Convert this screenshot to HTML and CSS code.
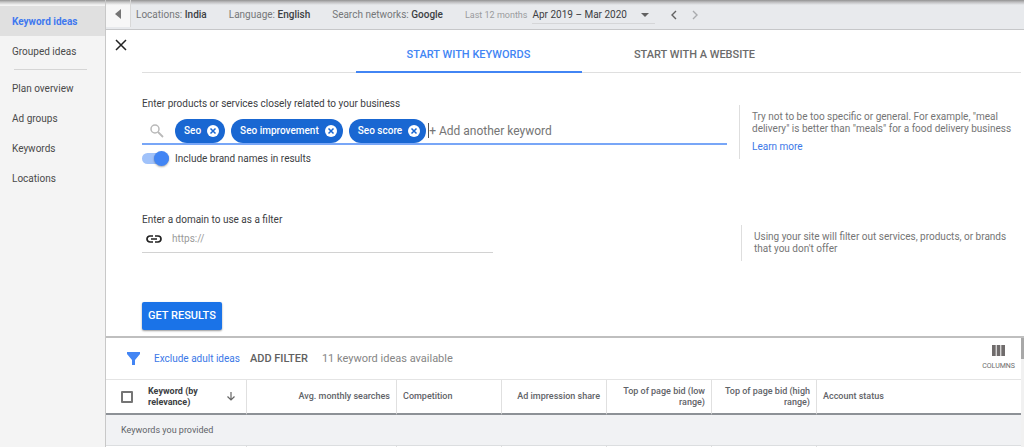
FILE: index.html
```html
<!DOCTYPE html>
<html lang="en">
<head>
<meta charset="utf-8">
<title>Keyword ideas</title>
<link rel="stylesheet" href="styles.css">
</head>
<body>
<div class="app">
  <nav class="sidebar" aria-label="Sections">
    <a class="nav-link active" href="#ideas">Keyword ideas</a>
    <a class="nav-link" href="#grouped">Grouped ideas</a>
    <hr class="nav-rule">
    <a class="nav-link" href="#plan">Plan overview</a>
    <a class="nav-link" href="#adgroups">Ad groups</a>
    <a class="nav-link" href="#keywords">Keywords</a>
    <a class="nav-link" href="#locations">Locations</a>
  </nav>

  <main class="content">
    <header class="topbar">
      <button class="collapse" aria-label="Collapse menu"><svg width="6" height="10" viewBox="0 0 6 10"><path d="M6 0v10L0 5z" fill="#757575"/></svg></button>
      <div class="settings">
        <span class="setting">Locations: <b>India</b></span>
        <span class="setting">Language: <b>English</b></span>
        <span class="setting">Search networks: <b>Google</b></span>
      </div>
      <span class="period">Last 12 months</span>
      <button class="dates">Apr 2019 – Mar 2020 <svg width="8" height="4" viewBox="0 0 8 4"><path d="M0 0h8L4 4z" fill="#616161"/></svg></button>
      <button class="step" aria-label="Previous period"><svg width="6" height="10" viewBox="0 0 6 10"><path d="M5 1L1 5l4 4" fill="none" stroke="#616161" stroke-width="1.4"/></svg></button>
      <button class="step" aria-label="Next period"><svg width="6" height="10" viewBox="0 0 6 10"><path d="M1 1l4 4-4 4" fill="none" stroke="#a9abae" stroke-width="1.4"/></svg></button>
    </header>

    <section class="panel">
      <button class="close" aria-label="Close"><svg width="12" height="12" viewBox="0 0 12 12"><path d="M1 1l10 10M11 1L1 11" stroke="#222" stroke-width="1.5"/></svg></button>
      <div class="panel-body">
        <div class="tabs" role="tablist">
          <button class="tab selected" role="tab" aria-selected="true">START WITH KEYWORDS</button>
          <button class="tab" role="tab" aria-selected="false">START WITH A WEBSITE</button>
        </div>

        <div class="form-row">
          <div class="field">
            <label class="label" for="keyword">Enter products or services closely related to your business</label>
            <div class="keyword-box">
              <svg class="search" width="14" height="14" viewBox="0 0 14 14"><circle cx="5" cy="5" r="4" fill="none" stroke="#b9b9b9" stroke-width="1.5"/><path d="M8 8l5 5" stroke="#b9b9b9" stroke-width="1.8"/></svg>
              <span class="chip">Seo <button class="remove" aria-label="Remove Seo"><svg width="12" height="12" viewBox="0 0 12 12"><circle cx="6" cy="6" r="6" fill="#fff"/><path d="M3.5 3.5l5 5M8.5 3.5l-5 5" stroke="#1967d2" stroke-width="1.5"/></svg></button></span>
              <span class="chip">Seo improvement <button class="remove" aria-label="Remove Seo improvement"><svg width="12" height="12" viewBox="0 0 12 12"><circle cx="6" cy="6" r="6" fill="#fff"/><path d="M3.5 3.5l5 5M8.5 3.5l-5 5" stroke="#1967d2" stroke-width="1.5"/></svg></button></span>
              <span class="chip">Seo score <button class="remove" aria-label="Remove Seo score"><svg width="12" height="12" viewBox="0 0 12 12"><circle cx="6" cy="6" r="6" fill="#fff"/><path d="M3.5 3.5l5 5M8.5 3.5l-5 5" stroke="#1967d2" stroke-width="1.5"/></svg></button></span>
              <input class="keyword-input" id="keyword" type="text" placeholder="+ Add another keyword">
            </div>
            <label class="toggle"><input class="switch" type="checkbox" role="switch" checked>Include brand names in results</label>
          </div>
          <aside class="hint">
            <p class="hint-text">Try not to be too specific or general. For example, "meal delivery" is better than "meals" for a food delivery business</p>
            <a class="more" href="#help">Learn more</a>
          </aside>
        </div>

        <div class="form-row domain-row">
          <div class="field">
            <label class="label" for="domain">Enter a domain to use as a filter</label>
            <div class="domain-box">
              <svg width="16" height="8" viewBox="0 0 16 8"><path d="M7 1H4a3 3 0 0 0 0 6h3M9 1h3a3 3 0 0 1 0 6H9M5 4h6" fill="none" stroke="#222" stroke-width="1.7"/></svg>
              <input class="domain-input" id="domain" type="text" placeholder="https://">
            </div>
          </div>
          <aside class="hint domain-hint">
            <p class="hint-text">Using your site will filter out services, products, or brands that you don't offer</p>
          </aside>
        </div>

        <button class="submit">GET RESULTS</button>
      </div>
    </section>

    <section class="results">
      <div class="results-main">
        <div class="toolbar">
          <svg class="funnel" width="13" height="13" viewBox="0 0 13 13"><path d="M0 0h13v2L8 8v5H5V8L0 2z" fill="#4285f4"/></svg>
          <a class="exclude" href="#exclude">Exclude adult ideas</a>
          <button class="add-filter">ADD FILTER</button>
          <span class="count">11 keyword ideas available</span>
          <button class="columns"><svg width="13" height="11" viewBox="0 0 13 11"><path d="M0 0h3.7v11H0zM4.7 0h3.6v11H4.7zM9.3 0H13v11H9.3z" fill="#706c6c"/></svg>COLUMNS</button>
        </div>
        <table class="table">
          <colgroup><col class="c-check"><col class="c-keyword"><col class="c-searches"><col class="c-mid"><col class="c-mid"><col class="c-mid"><col class="c-mid"><col></colgroup>
          <thead>
            <tr>
              <th class="check"><input class="box" type="checkbox" aria-label="Select all keywords"></th>
              <th class="sorted"><div class="sort">Keyword (by relevance)<svg width="8" height="9" viewBox="0 0 8 9"><path d="M4 0v8M0.5 4.5L4 8l3.5-3.5" fill="none" stroke="#666" stroke-width="1.2"/></svg></div></th>
              <th class="num">Avg. monthly searches</th>
              <th>Competition</th>
              <th class="num">Ad impression share</th>
              <th class="num">Top of page bid (low range)</th>
              <th class="num">Top of page bid (high range)</th>
              <th>Account status</th>
            </tr>
          </thead>
          <tbody>
            <tr class="group"><td colspan="8">Keywords you provided</td></tr>
            <tr class="row"><td class="check"></td><td class="first"></td><td></td><td></td><td></td><td></td><td></td><td></td></tr>
          </tbody>
        </table>
      </div>
      <div class="scrollbar"><div class="thumb"></div></div>
    </section>
  </main>
</div>
</body>
</html>
```
FILE: styles.css
```css
* { box-sizing: border-box; }

body {
  margin: 0;
  font-family: Roboto, "Liberation Sans", sans-serif;
  font-size: 10px;
  line-height: 12px;
  color: #3c4043;
  background: #fff;
}

button, input { font: inherit; color: inherit; }
button { margin: 0; padding: 0; border: 0; background: none; }
a { color: #3b78e7; text-decoration: none; }
svg { display: block; flex: none; }

.app {
  display: flex;
  height: 100vh;
  overflow: hidden;
}

.sidebar {
  flex: 0 0 105px;
  padding-top: 6px;
  background: linear-gradient(#929292, #c4c4c4 2px, #f4f4f4 5px);
}
.nav-link {
  display: flex;
  align-items: center;
  height: 30px;
  padding: 1px 0 0 12px;
  color: #4a4a4a;
}
.nav-link.active { background: #e0e0e0; color: #4079ef; font-weight: 700; }
.nav-rule { margin: 3px 18px 3px 14px; border: 0; border-top: 1px solid #d5d5d5; }

.content {
  flex: 1;
  min-width: 0;
  display: flex;
  flex-direction: column;
  border-left: 1px solid #c8c8c8;
}

.topbar {
  flex: none;
  display: flex;
  align-items: center;
  height: 30px;
  background: linear-gradient(#929292, #bcbcbe 2px, #e8eaed 5px);
  border-bottom: 1px solid #c6c7c9;
  color: #757779;
}
.collapse {
  display: flex;
  align-self: flex-start;
  align-items: center;
  justify-content: center;
  width: 25px;
  height: 27px;
  background: linear-gradient(#929292, #c4c4c4 2px, #f7f7f7 5px);
  border-right: 1px solid #d8d8d8;
}
.settings { display: flex; gap: 22px; padding-left: 5px; }
.setting b { font-weight: 500; color: #3c4043; }
.period { padding-left: 22px; font-size: 9px; color: #9a9b9d; }
.dates {
  display: flex;
  align-items: center;
  justify-content: space-between;
  width: 123px;
  height: 19px;
  margin: 0 16px 0 5px;
  padding: 1px 6px 0 0;
  border-bottom: 1px solid #d5d6d8;
  color: #3c4043;
}
.step { width: 6px; margin-right: 15px; }

.panel {
  flex: none;
  position: relative;
  padding: 0 3px 6px 36px;
  background: #fff;
  border-bottom: 2px solid #bfbfbf;
}
.close { position: absolute; left: 9px; top: 9px; }

.tabs {
  display: flex;
  justify-content: center;
  height: 43px;
  border-bottom: 1px solid #dfdfdf;
}
.tab {
  flex: 0 1 226px;
  height: 43px;
  padding-top: 8px;
  border-bottom: 2px solid transparent;
  font-size: 11px;
  font-weight: 500;
  color: #6b6b6b;
}
.tab.selected { color: #4285f4; border-bottom-color: #4285f4; }

.form-row {
  display: grid;
  grid-template-columns: minmax(0, 585px) minmax(0, 1fr);
  column-gap: 12px;
  padding-top: 25px;
}
.label { display: block; }
.keyword-box {
  display: flex;
  align-items: center;
  gap: 6px;
  height: 35px;
  padding: 8px 0 0 8px;
  border-bottom: 2px solid #78a6f7;
}
.search { margin-right: 5px; }
.chip {
  display: flex;
  flex: none;
  align-items: center;
  gap: 6px;
  height: 24px;
  padding: 0 6px 0 9px;
  border-radius: 12px;
  background: #1967d2;
  color: #fff;
  font-weight: 500;
}
.keyword-input {
  flex: 1;
  min-width: 0;
  height: 15px;
  margin-left: -4px;
  padding: 0;
  border: 0;
  border-left: 1px solid #555;
  outline: 0;
  background: none;
  font-size: 12px;
}
.keyword-input::placeholder { color: #757575; }

.toggle { display: flex; align-items: center; gap: 6px; height: 27px; }
.switch {
  appearance: none;
  display: flex;
  align-items: center;
  justify-content: flex-end;
  width: 27px;
  height: 11px;
  margin: 0;
  border-radius: 6px;
  background: #a0c2fa;
}
.switch::before {
  content: "";
  flex: none;
  width: 15px;
  height: 15px;
  border-radius: 50%;
  background: #4285f4;
  box-shadow: 0 1px 2px #0005;
}

.hint {
  align-self: start;
  margin-top: 7px;
  padding: 6px 0 6px 12px;
  border-left: 1px solid #dedede;
  color: #757575;
}
.hint-text { margin: 0; }
.more { display: block; margin-top: 6px; }

.domain-row { padding-top: 42px; column-gap: 14px; }
.domain-box {
  display: flex;
  align-items: center;
  gap: 10px;
  width: 60%;
  height: 27px;
  padding-left: 4px;
  border-bottom: 1px solid #d2d2d2;
}
.domain-input {
  flex: 1;
  min-width: 0;
  padding: 0;
  border: 0;
  outline: 0;
  background: none;
}
.domain-input::placeholder { color: #9a9a9a; }
.domain-hint { margin-top: 11px; }

.submit {
  display: block;
  height: 28px;
  margin-top: 41px;
  padding: 0 6px;
  border-radius: 2px;
  background: #1a73e8;
  box-shadow: 0 1px 2px #0006;
  color: #fff;
  font-size: 11px;
  font-weight: 500;
}

.results { flex: 1; display: flex; min-height: 0; overflow: hidden; }
.results-main { flex: 1; min-width: 0; }
.scrollbar { flex: 0 0 3px; background: #f1f1f1; }
.thumb { height: 21px; background: #a8a8a8; }

.toolbar {
  display: flex;
  align-items: center;
  height: 41px;
  padding: 0 6px 0 21px;
}
.exclude { margin-left: 14px; }
.add-filter { margin-left: 10px; font-size: 11px; font-weight: 500; color: #616161; }
.count { margin-left: 14px; font-size: 11px; color: #858585; }
.columns {
  display: flex;
  flex-direction: column;
  align-items: center;
  gap: 4px;
  margin-left: auto;
  font-size: 7px;
  color: #6b6b6b;
}

.table {
  width: 100%;
  table-layout: fixed;
  border-collapse: separate;
  border-spacing: 0;
  border-top: 1px solid #e4e4e4;
}
.c-check { width: 36px; }
.c-keyword { width: 104px; }
.c-searches { width: 150px; }
.c-mid { width: 105px; }
.table th {
  height: 35px;
  padding: 0 6px;
  border-left: 1px solid #e0e0e0;
  border-bottom: 2px solid #8d9196;
  font-size: 9px;
  line-height: 11px;
  font-weight: 500;
  text-align: left;
  color: #5f6368;
}
.table th.num { text-align: right; }
.table th.check { padding: 0 0 0 15px; border-left: 0; }
.table th.sorted { border-left: 0; color: #3c4043; font-weight: 700; }
.sort { display: flex; align-items: center; justify-content: space-between; gap: 20px; padding-right: 5px; }
.box {
  appearance: none;
  display: block;
  width: 12px;
  height: 12px;
  margin: 0;
  border: 2px solid #757575;
  border-radius: 1px;
}
.group td {
  height: 31px;
  padding: 0 15px;
  background: #f1f2f4;
  border-bottom: 1px solid #dcdee0;
  font-size: 9px;
  color: #5f6368;
}
.row td { height: 30px; border-left: 1px solid #e0e0e0; }
.row .check, .row .first { border-left: 0; }
```
